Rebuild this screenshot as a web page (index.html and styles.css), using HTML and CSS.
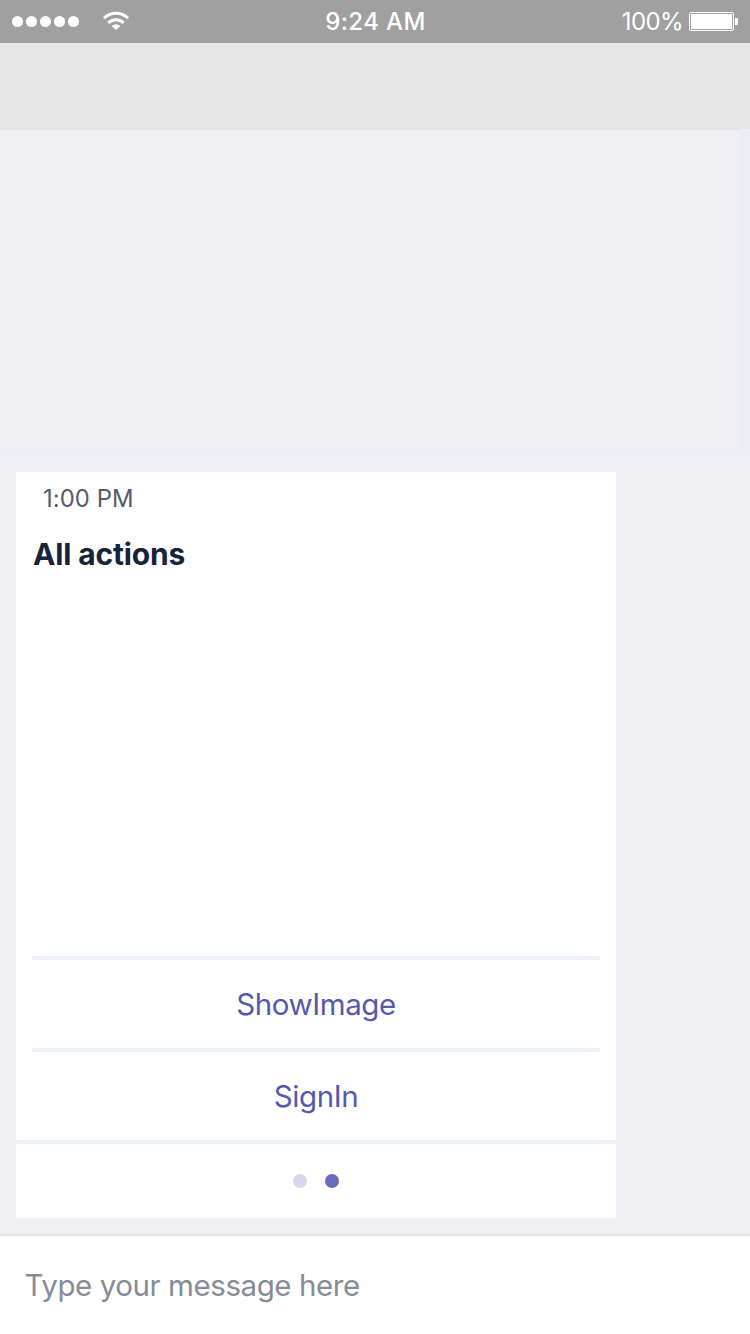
FILE: index.html
```html
<!DOCTYPE html>
<html lang="en">
<head>
<meta charset="utf-8">
<title>Chat</title>
<link rel="stylesheet" href="styles.css">
</head>
<body>
<div class="screen">
  <header class="status">
    <div class="signal">
      <span class="dots"><i></i><i></i><i></i><i></i><i></i></span>
      <svg class="wifi" width="28" height="20" viewBox="0 0 28 20" fill="none" stroke="#fff" stroke-width="3">
        <path d="M2 7.3a17 17 0 0 1 24 0"/>
        <path d="M6.3 11.9a11 11 0 0 1 15.4 0"/>
        <path d="M14 19l-4.4-4.1a6.5 6.5 0 0 1 8.8 0z" fill="#fff" stroke="none"/>
      </svg>
    </div>
    <span class="clock">9:24 AM</span>
    <div class="power">
      <span class="percent">100%</span>
      <svg width="49" height="19" viewBox="0 0 49 19"><rect x=".5" y=".5" width="44" height="18" rx="1.5" fill="none" stroke="#fff"/><rect x="2" y="2" width="41" height="15" fill="#fff"/><path d="M46 6h2a1 1 0 0 1 1 1v5a1 1 0 0 1-1 1h-2z" fill="#fff"/></svg>
    </div>
  </header>
  <div class="navbar"></div>
  <main class="chat">
    <article class="card">
      <time class="time">1:00 PM</time>
      <h1 class="title"><span>All actions</span></h1>
      <div class="actions">
        <div class="action"><span class="show">ShowImage</span></div>
        <div class="action"><span class="sign">SignIn</span></div>
      </div>
      <div class="pager"><i></i><i class="active"></i></div>
    </article>
  </main>
  <footer class="composer"><span>Type your message here</span></footer>
</div>
</body>
</html>
```

FILE: styles.css
```css
* { box-sizing: border-box; }
body { margin: 0; font-family: Inter, "Liberation Sans", sans-serif; }
.screen { width: 750px; height: 1334px; display: flex; flex-direction: column; background: #efeff4; overflow: hidden; }
.status { height: 43px; background: #a0a0a0; color: #fff; display: grid; grid-template-columns: 1fr auto 1fr; align-items: center; font-size: 24px; line-height: 43px; }
.signal { display: flex; align-items: center; padding-left: 12px; gap: 23px; }
.dots { display: flex; gap: 3px; }
.dots i { width: 11px; height: 11px; border-radius: 50%; background: #fff; }
.wifi { margin-top: -2px; }
.clock { font-weight: 500; font-size: 24px; letter-spacing: 0.4px; padding: 1px 0 0 1px; line-height: 42px; }
.power { display: flex; justify-content: flex-end; align-items: center; gap: 6px; padding-right: 12px; }
.percent { font-size: 24px; letter-spacing: -0.6px; padding-top: 1px; line-height: 42px; }
.navbar { height: 87px; background: linear-gradient(#ebeff4, #ebeff4) right bottom / 10px 1px no-repeat #e6e6e6; }
.chat {
  flex: 1;
  padding: 342px 0 16px 16px;
  background:
    linear-gradient(#ebeff4, #ebeff4) right top / 10px 325px no-repeat,
    linear-gradient(#ecf0f5, #ecf0f5) left 0 top 300px / 100% 5px no-repeat,
    linear-gradient(#edeff4, #edeff4) left 0 top 316px / 100% 9px no-repeat;
}
.card { width: 600px; height: 746px; background: #fff; display: flex; flex-direction: column; }
.time { padding: 12px 0 0 27px; font-size: 23.8px; letter-spacing: 0.1px; line-height: 30px; color: #525c6d; }
.title { margin: 20px 0 0 17px; font-size: 30px; letter-spacing: -0.15px; line-height: 40px; font-weight: 700; color: #16233a; }
.actions { margin: auto 16px 0; }
.action { height: 92px; border-top: 4px solid #edf0f5; display: flex; align-items: center; justify-content: center; font-size: 29.5px; letter-spacing: -0.4px; color: #5558af; }
.pager { height: 78px; border-top: 4px solid #edf0f5; display: flex; align-items: center; justify-content: center; gap: 18px; }
.pager i { width: 14px; height: 14px; border-radius: 50%; background: #d8d8ec; }
.pager .active { background: #6a6cb9; }
.composer { height: 100px; border-top: 2px solid #e6e6e8; background: #fff; padding: 0 0 1px 24.5px; display: flex; align-items: center; font-size: 29.5px; letter-spacing: -0.43px; color: #858c98; }
```
